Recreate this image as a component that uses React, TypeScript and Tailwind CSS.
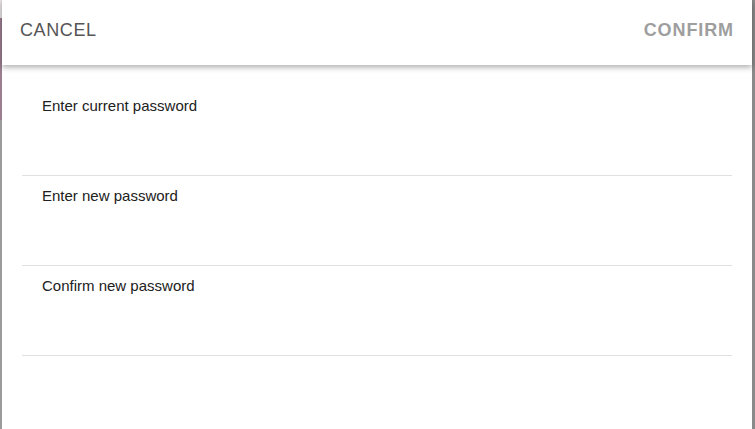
import React from "react";

const fields = ["Enter current password", "Enter new password", "Confirm new password"];

export default function App() {
  return (
    <div className="flex h-[429px] w-full overflow-hidden bg-[#8e8e8e]" style={{ fontFamily: '"Liberation Sans", Arial, sans-serif' }}>
      <div className="flex w-[2px] flex-col">
        <div className="h-[18px] bg-[#e8e4e6]" />
        <div className="h-[102px] bg-[#9a7d8f]" />
        <div className="flex-1 bg-[#9b9b9b]" />
      </div>
      <div className="flex flex-1 flex-col bg-white">
        <div className="relative z-10 flex h-[65px] items-center justify-between pb-[4px] pl-[18px] pr-[18px] shadow-[0_2px_6px_rgba(0,0,0,0.35)]">
          <span className="text-[18px] tracking-[0.6px] text-[#555555]">CANCEL</span>
          <span className="text-[18px] font-bold tracking-[0.9px] text-[#9e9e9e]">CONFIRM</span>
        </div>
        <div className="mt-[21px] flex flex-col px-[20px]">
          {fields.map((f) => (
            <div key={f} className="h-[90px] border-b border-[#e0e0e0] px-[20px] pt-[11px]">
              <span className="block text-[15px] leading-[17px] text-[#212121]">{f}</span>
            </div>
          ))}
        </div>
      </div>
      <div className="w-[3px] bg-[#8a8a8a]" />
    </div>
  );
}
